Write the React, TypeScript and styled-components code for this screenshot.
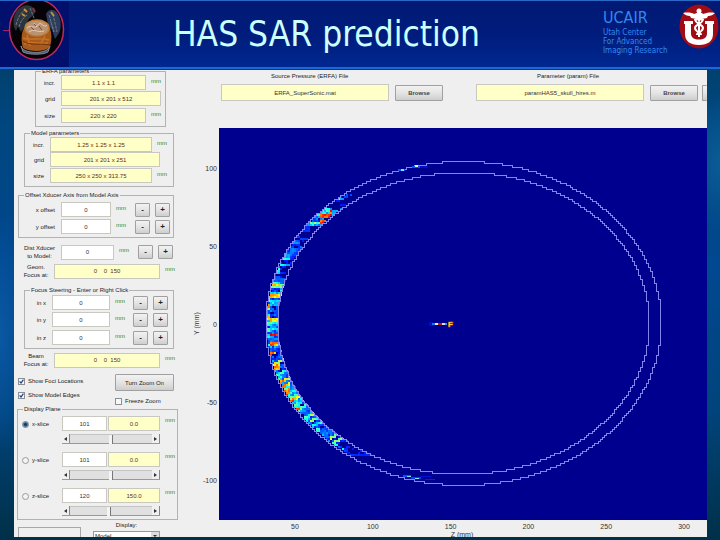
import React from "react";
import styled, { createGlobalStyle } from "styled-components";

const GlobalStyle = createGlobalStyle`
  *, *::before, *::after { box-sizing: border-box; }
  body { margin: 0; background: #003a6c; font-family: "Liberation Sans", Arial, sans-serif; }
  button, input, select { font: inherit; color: inherit; margin: 0; }
`;

const Slide = styled.div`
  display: flex;
  flex-direction: column;
  height: 100vh;
  overflow: hidden;
  background:
    radial-gradient(ellipse 40px 70px at 100% 30%, #0a5c96 0, transparent 100%),
    radial-gradient(ellipse 30px 120px at 0 62%, #0a58a4 0, transparent 100%),
    linear-gradient(#003a58 0, #00467e 22%, #004890 50%, #00447c 76%, #003048 100%);
`;

const Header = styled.header`
  display: flex;
  flex: none;
  height: 69px;
  border-top: 1px solid #2a68c8;
  border-bottom: 2px solid #1c68d8;
  background: linear-gradient(#001a74 0, #001c7c 50%, #002890 100%);
`;

const BasketCell = styled.div`
  width: 69px;
  background: #00106c;
  svg { display: block; }
`;

const Title = styled.h1`
  flex: 1;
  margin: 0;
  padding: 0 19px 0 0;
  font: 400 35px/66px "DejaVu Sans Condensed", "Noto Sans", sans-serif;
  text-align: center;
  white-space: nowrap;
  color: #ccffff;
`;

const Org = styled.div`
  width: 76px;
  padding-top: 8px;
  font: 400 8px/9px "DejaVu Sans Condensed", "Noto Sans", sans-serif;
  white-space: nowrap;
  color: #3388f0;
  strong { display: block; margin-bottom: 1px; font-size: 16px; font-weight: 400; line-height: 18px; }
`;

const SealCell = styled.div`
  width: 41px;
  padding-top: 3px;
  svg { display: block; }
`;

const AppWindow = styled.main`
  display: flex;
  flex: 1;
  min-height: 0;
  margin: 1px 13px 3px 14px;
  overflow: hidden;
  background: #efefef;
  color: #222;
  font-size: 6px;
  line-height: 8px;
`;

const Sidebar = styled.aside`
  flex: none;
  width: 177px;
  margin-top: -3px;
`;

const Group = styled.fieldset<{ $inset: number; $right: number; $pad?: number; $top?: number }>`
  min-width: 0;
  border: 1px solid #b2b2b2;
  margin: ${(p) => p.$top ?? 0}px ${(p) => p.$right}px 0 ${(p) => p.$inset}px;
  padding: ${(p) => p.$pad ?? 0}px 0 3px;
  legend { margin-left: 5px; padding: 0 1px; line-height: 8px; white-space: nowrap; }
`;

const Row = styled.div<{ $label: number; $field: number; $top?: number }>`
  display: grid;
  grid-template-columns: ${(p) => p.$label}px ${(p) => p.$field}px auto 1fr;
  align-items: center;
  height: 15px;
  margin-top: ${(p) => p.$top ?? 0}px;
`;

const Label = styled.label`
  padding-right: 6px;
  text-align: right;
  line-height: 8px;
  white-space: pre-line;
`;

const TwoLine = styled(Label)`
  text-align: center;
  padding: 0 0 0 4px;
`;

const Field = styled.input<{ $computed?: boolean }>`
  width: 100%;
  min-width: 0;
  height: 15px;
  padding: 0;
  border: 1px solid #c8c8c0;
  border-radius: 0;
  background: ${(p) => (p.$computed ? "#ffffc8" : "#fff")};
  color: ${(p) => (p.$computed ? "#5a3020" : "#333")};
  text-align: center;
  outline: 0;
`;

const Unit = styled.span`
  padding: 0 0 4px 5px;
  color: #1c8a2c;
  line-height: 8px;
`;

const Steps = styled.div<{ $left: number }>`
  display: flex;
  gap: 5px;
  padding-left: ${(p) => p.$left}px;
`;

const PushButton = styled.button`
  display: flex;
  align-items: center;
  justify-content: center;
  min-width: 15px;
  height: 14px;
  padding: 0;
  border: 1px solid #a0a0a0;
  border-radius: 1px;
  background: linear-gradient(#f2f2f2, #e4e4e4 50%, #cecece);
`;

const StepButton = styled(PushButton)`
  font-size: 8px;
  font-weight: 700;
`;

const WideButton = styled(PushButton)`
  width: 59px;
  height: 17px;
`;

const BrowseButton = styled(PushButton)`
  width: 48px;
  height: 16px;
  font-weight: 700;
  color: #444;
`;

const Options = styled.div`
  display: flex;
  justify-content: space-between;
  margin: 7px 17px 0 4px;
`;

const OptionColumn = styled.div`
  display: flex;
  flex-direction: column;
  gap: 6px;
`;

const Choice = styled.label`
  display: flex;
  align-items: center;
  gap: 3px;
  height: 8px;
  white-space: nowrap;
`;

const FociColumn = styled(OptionColumn)`
  padding-top: 3px;
`;

const Tick = styled.input`
  appearance: none;
  width: 7px;
  height: 7px;
  border: 1px solid #8a8f98;
  background: #f8f8f8;
  &:checked {
    background: #f4f6fc url("data:image/svg+xml,%3Csvg xmlns='http://www.w3.org/2000/svg' viewBox='0 0 5 5'%3E%3Cpath d='M.6 2.4 2 4 4.4.6' fill='none' stroke='%23204080' stroke-width='1.2'/%3E%3C/svg%3E");
  }
`;

const Radio = styled.input`
  appearance: none;
  width: 7px;
  height: 7px;
  border: 1px solid #999;
  border-radius: 50%;
  background: #f4f4f4;
  &:checked { background: radial-gradient(circle, #123c66 0 1px, #8ac0e0 3px); border-color: #708090; }
`;

const Slice = styled.div`
  display: grid;
  grid-template-columns: 40px 98px 1fr;
  height: 28px;
  margin-bottom: 8px;
  padding-left: 4px;
  &:last-child { margin-bottom: 0; }
`;

const SliceChoice = styled(Choice)`
  margin-top: 4px;
`;

const Pair = styled.div`
  display: grid;
  grid-template-columns: 45px 1fr;
  column-gap: 1px;
`;

const ScrollBar = styled.div`
  display: flex;
  height: 10px;
  margin-top: 3px;
  border-bottom: 1px solid #999;
`;

const Arrow = styled.button`
  display: flex;
  align-items: center;
  justify-content: center;
  width: 8px;
  padding: 0;
  border: 0;
  border-right: 1px solid #888;
  background: #f0f0f0;
`;

const Range = styled.input`
  appearance: none;
  flex: 1;
  min-width: 0;
  height: 9px;
  background: #e0e0e0;
  border-top: 1px solid #c4c4c4;
  &::-webkit-slider-thumb {
    appearance: none;
    width: 4px;
    height: 9px;
    background: #f4f4f4;
    border-right: 1px solid #777;
  }
`;

const Footer = styled.div`
  display: grid;
  grid-template-columns: 63px 67px;
  column-gap: 12px;
  margin: 1px 0 0 4px;
`;

const Notes = styled.div`
  height: 24px;
  margin-top: 6px;
  border: 1px solid #a8a8a8;
`;

const DisplayLabel = styled.label`
  display: flex;
  flex-direction: column;
  align-items: center;
  gap: 2px;
`;

const Select = styled.select`
  appearance: none;
  width: 100%;
  height: 10px;
  padding: 0 0 0 1px;
  border: 1px solid #999;
  border-radius: 0;
  line-height: 8px;
  background:
    url("data:image/svg+xml,%3Csvg xmlns='http://www.w3.org/2000/svg' viewBox='0 0 8 8'%3E%3Cpath d='M2 3h4L4 5z' fill='%23333'/%3E%3C/svg%3E") right / 8px 8px no-repeat,
    #fff linear-gradient(#dcdcdc, #dcdcdc) right / 8px 100% no-repeat;
`;

const Viewer = styled.section`
  display: flex;
  flex: 1;
  flex-direction: column;
  min-width: 0;
`;

const Files = styled.div`
  display: flex;
  gap: 4px;
  height: 58px;
  padding: 2px 0 0 30px;
`;

const FileGroup = styled.div`
  flex: 1;
  display: grid;
  grid-template-columns: 1fr auto;
  grid-template-rows: 8px 17px;
  gap: 4px 6px;
  align-items: center;
  &:first-child { margin-right: 29px; }
  label { grid-column: 1 / 3; }
`;

const FileLabel = styled.label<{ $shift: number }>`
  padding-left: ${(p) => p.$shift}px;
`;

const FileField = styled(Field)`
  height: 17px;
  color: #333;
`;

const CutButton = styled(PushButton)`
  width: 5px;
  min-width: 0;
  height: 16px;
  margin-top: 13px;
  border-right: 0;
`;

const Plot = styled.figure`
  flex: 1;
  display: grid;
  grid-template-columns: 12px 16px minmax(0, 1fr);
  grid-template-rows: minmax(0, 1fr) 17px;
  min-height: 0;
  margin: 0;
  font-size: 7px;
  color: #333;
`;

const YTitle = styled.div`
  writing-mode: vertical-rl;
  transform: rotate(180deg);
  text-align: center;
  line-height: 12px;
`;

const YTicks = styled.div`
  display: flex;
  flex-direction: column;
  align-items: flex-end;
  justify-content: space-between;
  padding: 37px 2px 35px;
  white-space: nowrap;
`;

const Chart = styled.svg`
  display: block;
  width: 100%;
  height: 100%;
  background: #00008f;
`;

const XAxis = styled.figcaption`
  grid-column: 3;
  text-align: center;
`;

const XTicks = styled.div`
  display: flex;
  justify-content: space-between;
  padding: 3px 13px 0 66px;
  line-height: 8px;
  span { width: 20px; }
`;

const XTitle = styled.div`
  padding-right: 2px;
  line-height: 8px;
`;

/* ---- field map ---- */

const CX = 244;
const CY = 195;

function contour(rx: number, ry: number) {
  const snap = (v: number) => Math.floor(v / 2) * 2 + 1;
  let d = "";
  let lastX = NaN;
  let lastY = NaN;
  for (let i = 0; i <= 1440; i++) {
    const a = ((i + 0.5) / 1440) * Math.PI * 2;
    const x = snap(CX + rx * Math.cos(a));
    const y = snap(CY + ry * Math.sin(a));
    if (!d) d = `M${x} ${y}`;
    else {
      if (x !== lastX) d += `H${x}`;
      if (y !== lastY) d += `V${y}`;
    }
    lastX = x;
    lastY = y;
  }
  return d;
}

function hash(a: number, b: number) {
  const s = Math.sin(a * 127.1 + b * 311.7) * 43758.5453;
  return s - Math.floor(s);
}

function jet(t: number) {
  const c = (k: number) => Math.round(255 * Math.max(0, Math.min(1, 1.5 - Math.abs(4 * t - k))));
  return `rgb(${c(3)},${c(2)},${c(1)})`;
}

function strength(x: number, y: number, depth: number) {
  if (y < 66) return 0;
  if (y < 72) return depth < 0.4 ? 0.45 : 0;
  if (y < 80) return 0.06;
  if (y < 97) return x < 112 ? 1.15 : 0.3;
  if (y < 112) return 0.12;
  if (y < 156) return 0.55 * (1 - depth * 0.7);
  if (y < 176) return 0.85 * (1 - depth * 0.2);
  if (y < 222) return 1 - depth * 0.15;
  if (y < 300) return 0.95 - depth * 0.4;
  if (y < 314) return 0.7 - depth * 0.2;
  if (y < 328) return depth < 0.2 ? 0.5 : 0.1;
  return 0.04;
}

type Cell = { x: number; y: number; fill: string };

function heatCells(): Cell[] {
  const out: Cell[] = [];
  for (let y = 36; y < 350; y += 2) {
    for (let x = 47; x < 180; x += 2) {
      const ox = (x + 1 - CX) / 197;
      const oy = (y + 1 - CY) / 161;
      const r = Math.sqrt(ox * ox + oy * oy);
      const depth = (1 - r) / 0.06;
      if (depth < 0 || depth > 1) continue;
      const v = y > 222 ? y + x * 0.5 : y + x * 0.1;
      const streak = hash(Math.floor(x / 10), Math.floor(v / 3));
      const grain = hash(x, y);
      const t = strength(x, y, depth) * (0.85 * streak * streak + 0.2 * grain);
      if (t > 0.05) out.push({ x, y, fill: jet(0.1 + t * 0.85) });
    }
  }
  return out;
}

const CELLS = heatCells();
const OUTER = contour(198, 162);
const INNER = contour(186, 151);

const FieldMap = () => (
  <Chart viewBox="0 0 488 392" preserveAspectRatio="none" role="img" aria-label="Predicted SAR, x-slice">
    <g shapeRendering="crispEdges">
      {CELLS.map((c) => (
        <rect key={`${c.x}-${c.y}`} x={c.x} y={c.y} width="2" height="2" fill={c.fill} />
      ))}
      <g transform="translate(.5 .5)" fill="none" stroke="#8484ee">
        <path d={OUTER} />
        <path d={INNER} />
      </g>
      <g fill="#0a50ff">
        <rect x="179" y="41" width="7" height="2" />
        <rect x="193" y="38" width="8" height="2" />
        <rect x="201" y="38" width="8" height="2" fill="#0010c8" />
        <rect x="184" y="347" width="8" height="2" />
        <rect x="192" y="349" width="10" height="2" fill="#0040ff" />
        <rect x="202" y="348" width="10" height="1" fill="#0010d0" />
        <rect x="206" y="351" width="10" height="1" fill="#0020e0" />
      </g>
      <g fill="#70e8ff">
        <rect x="182" y="41" width="3" height="2" />
        <rect x="196" y="37" width="3" height="2" fill="#d8ffb0" />
        <rect x="188" y="348" width="4" height="1" />
        <rect x="196" y="350" width="4" height="1" />
      </g>
      <rect x="206" y="195" width="4" height="2" fill="#0000a4" />
      <rect x="210" y="194" width="4" height="4" fill="#0010c0" />
      <rect x="213" y="195" width="3" height="2" fill="#1870ff" />
      <rect x="216" y="195" width="3" height="2" fill="#c8ffd0" />
      <rect x="219" y="195" width="4" height="2" fill="#c01820" />
      <rect x="223" y="195" width="3" height="2" fill="#e0d8e0" />
      <rect x="226" y="195" width="2" height="2" fill="#3090ff" />
    </g>
    <text x="229" y="199" fontSize="8" fontWeight="700" fill="#ffd040" stroke="#b02010" strokeWidth="1" paintOrder="stroke">
      F
    </text>
  </Chart>
);

/* ---- logos ---- */

const BasketLogo = () => (
  <svg width="69" height="64" viewBox="0 1 69 64" aria-label="Angel vessel emblem" role="img">
    <path d="M3 30.500h6" stroke="#a81c70" />
    <ellipse cx="36.500" cy="29.500" rx="27" ry="30" fill="#050208" stroke="#c02860" strokeWidth="1.500" />
    <path d="M14 27c-2-9 1-18 9-21 6-2 11 1 12 6-1 4-7 6-8 11l-6 9-3-6-2 5z" fill="#2c343e" />
    <path d="M46 14c3-6 9-5 12 0 3 5 4 13 1 19l-4 6-3-9-4-5z" fill="#2c3c5c" />
    <path d="M16 25c2-7 4-12 9-15M19 27c1-5 4-9 8-12M30 8l4 10M49 15l5 17M53 14l4 18M51 22l3 10" stroke="#6c7886" fill="none" strokeDasharray="3 1" />
    <path d="m24 9 3 3m-5 2 3 2m26-4 3 4" stroke="#c8903c" strokeWidth="2" />
    <path d="M33 8l2 4" stroke="#883038" strokeWidth="2" />
    <path d="M21 46c1 8 27 9 29 0l-2 6c-5 3-19 3-25 0z" fill="#4c5870" stroke="#94a0ac" strokeWidth=".8" />
    <path d="M24 28c6-4 19-4 26 0 2 7 2 15-1 20-6 4-19 4-26 0-2-7-2-14 1-20z" fill="#a85a1c" />
    <path d="M23 38c7 3 18-1 26 2M24 44c8-4 16 1 24-1M27 35l3 11M45 36l-5 9" stroke="#c87428" strokeWidth="1.500" fill="none" />
    <path d="M23 41c6 5 18 2 27 4" stroke="#6a300c" fill="none" />
    <ellipse cx="37" cy="28" rx="12" ry="8" fill="#b89470" stroke="#c07c3c" strokeWidth="1.500" />
    <path d="M27 28c4-4 8 2 11-3s5 4 9 0M29 32c5-4 8 1 15-1M34 23l3 4" stroke="#e8c8b4" fill="none" />
    <path d="m31 27 3 3m5-4 3 4m-8-6 2 2" stroke="#784844" />
  </svg>
);

const Seal = () => (
  <svg width="40" height="46" viewBox="679 4 40 46" role="img" aria-label="University seal">
    <ellipse cx="699" cy="26.500" rx="19.500" ry="22" fill="#a00c14" />
    <path d="M684 21h9v3h-2v9c0 4 2 6.500 8 6.500s8-2.500 8-6.500v-9h-2v-3h9v3h-1v10c0 7-5 11-14 11s-14-4-14-11V24h-1z" fill="#fff" />
    <path d="M683 13c5-1 9 0 12 1l1-1h6l1 1c3-1 7-2 12-1-2 2-4 3-7 3l-1 2-5 1v2h-6v-2l-5-1-1-2c-3 0-5-1-7-3z" fill="#fff" />
    <circle cx="699" cy="11" r="2.500" fill="#fff" />
    <path d="M699 12v25" stroke="#fff" strokeWidth="2" />
    <path d="M695 19c0 5 8 5 8 9 0 4-6 3-6 7M703 19c0 5-8 5-8 9 0 4 6 3 6 7" fill="none" stroke="#fff" strokeWidth="2" />
    <path d="m697 20 1 2m-1 8h1m3-10-1 2m0 8h1" stroke="#a00c14" strokeWidth=".8" />
  </svg>
);

/* ---- panel pieces ---- */

type LineProps = {
  id: string;
  label: string;
  value: string;
  labelWidth: number;
  width: number;
  top?: number;
  computed?: boolean;
  unit?: boolean;
  stepLeft?: number;
  stacked?: boolean;
};

const Line = ({ id, label, value, labelWidth, width, top, computed, unit = true, stepLeft, stacked }: LineProps) => {
  const Caption = stacked ? TwoLine : Label;
  return (
    <Row $label={labelWidth} $field={width} $top={top}>
      <Caption htmlFor={id}>{label}</Caption>
      <Field id={id} defaultValue={value} readOnly={computed} $computed={computed} />
      {unit ? <Unit>mm</Unit> : <span />}
      {stepLeft !== undefined && (
        <Steps $left={stepLeft}>
          <StepButton aria-label={`Decrease ${label}`}>-</StepButton>
          <StepButton aria-label={`Increase ${label}`}>+</StepButton>
        </Steps>
      )}
    </Row>
  );
};

const SLICES = [
  { axis: "x", index: "101", mm: "0.0", pos: 50 },
  { axis: "y", index: "101", mm: "0.0", pos: 50 },
  { axis: "z", index: "120", mm: "150.0", pos: 47 },
];

export default function App() {
  return (
    <>
      <GlobalStyle />
      <Slide>
        <Header>
          <BasketCell><BasketLogo /></BasketCell>
          <Title>HAS SAR prediction</Title>
          <Org>
            <strong>UCAIR</strong>
            Utah Center<br />For Advanced<br />Imaging Research
          </Org>
          <SealCell><Seal /></SealCell>
        </Header>
        <AppWindow>
          <Sidebar>
            <Group $inset={21} $right={25}>
              <legend>ERFA parameters</legend>
              <Line id="e-incr" label="incr." value="1.1 x 1.1" labelWidth={25} width={85} computed />
              <Line id="e-grid" label="grid" value="201 x 201 x 512" labelWidth={25} width={100} top={1} computed unit={false} />
              <Line id="e-size" label="size" value="220 x 220" labelWidth={25} width={85} top={2} computed />
            </Group>
            <Group $inset={10} $right={17} $top={2}>
              <legend>Model parameters</legend>
              <Line id="m-incr" label="incr." value="1.25 x 1.25 x 1.25" labelWidth={25} width={102} computed />
              <Line id="m-grid" label="grid" value="201 x 201 x 251" labelWidth={25} width={110} computed unit={false} />
              <Line id="m-size" label="size" value="250 x 250 x 313.75" labelWidth={25} width={102} top={1} computed />
            </Group>
            <Group $inset={4} $right={17} $top={4} $pad={3}>
              <legend>Offset  Xducer Axis from Model Axis</legend>
              <Line id="o-x" label="x offset" value="0" labelWidth={42} width={50} stepLeft={9} />
              <Line id="o-y" label="y offset" value="0" labelWidth={42} width={50} top={2} stepLeft={9} />
            </Group>
            <Line id="dist" label={"Dist Xducer\nto Model:"} value="0" labelWidth={47} width={53} top={6} stepLeft={9} stacked />
            <Line id="geom" label={"Geom.\nFocus at:"} value="0    0  150" labelWidth={40} width={106} top={4} computed stacked />
            <Group $inset={10} $right={17} $top={8} $pad={1}>
              <legend>Focus Steering - Enter or Right Click</legend>
              <Line id="f-x" label="in x" value="0" labelWidth={27} width={58} stepLeft={8} />
              <Line id="f-y" label="in y" value="0" labelWidth={27} width={58} top={2} stepLeft={8} />
              <Line id="f-z" label="in z" value="0" labelWidth={27} width={58} top={3} stepLeft={8} />
            </Group>
            <Line id="beam" label={"Beam\nFocus at:"} value="0    0  150" labelWidth={40} width={106} top={3} computed stacked />
            <Options>
              <FociColumn>
                <Choice><Tick type="checkbox" defaultChecked />Show Foci Locations</Choice>
                <Choice><Tick type="checkbox" defaultChecked />Show Model Edges</Choice>
              </FociColumn>
              <OptionColumn>
                <WideButton>Turn Zoom On</WideButton>
                <Choice><Tick type="checkbox" />Freeze Zoom</Choice>
              </OptionColumn>
            </Options>
            <Group $inset={3} $right={13} $pad={3}>
              <legend>Display Plane</legend>
              {SLICES.map((s) => (
                <Slice key={s.axis}>
                  <SliceChoice>
                    <Radio type="radio" name="plane" defaultChecked={s.axis === "x"} />
                    {s.axis}-slice
                  </SliceChoice>
                  <div>
                    <Pair>
                      <Field aria-label={`${s.axis} slice index`} defaultValue={s.index} />
                      <Field aria-label={`${s.axis} slice position`} defaultValue={s.mm} readOnly $computed />
                    </Pair>
                    <ScrollBar>
                      <Arrow aria-label="Previous slice">
                        <svg width="3" height="4"><path d="M3 0v4L0 2z" fill="#333" /></svg>
                      </Arrow>
                      <Range type="range" aria-label={`${s.axis} slice`} defaultValue={s.pos} />
                      <Arrow aria-label="Next slice">
                        <svg width="3" height="4"><path d="M0 0v4l3-2z" fill="#333" /></svg>
                      </Arrow>
                    </ScrollBar>
                  </div>
                  <Unit>mm</Unit>
                </Slice>
              ))}
            </Group>
            <Footer>
              <Notes />
              <DisplayLabel>
                Display:
                <Select defaultValue="Model"><option>Model</option></Select>
              </DisplayLabel>
            </Footer>
          </Sidebar>
          <Viewer>
            <Files>
              <FileGroup>
                <FileLabel htmlFor="erfa" $shift={50}>Source Pressure (ERFA) File</FileLabel>
                <FileField id="erfa" defaultValue="ERFA_SuperSonic.mat" $computed />
                <BrowseButton>Browse</BrowseButton>
              </FileGroup>
              <FileGroup>
                <FileLabel htmlFor="param" $shift={61}>Parameter (param) File</FileLabel>
                <FileField id="param" defaultValue="paramHAS5_skull_hires.m" $computed />
                <BrowseButton>Browse</BrowseButton>
              </FileGroup>
              <CutButton aria-label="More" />
            </Files>
            <Plot>
              <YTitle>Y (mm)</YTitle>
              <YTicks>
                {["100", "50", "0", "-50", "-100"].map((t) => <span key={t}>{t}</span>)}
              </YTicks>
              <FieldMap />
              <XAxis>
                <XTicks>
                  {["50", "100", "150", "200", "250", "300"].map((t) => <span key={t}>{t}</span>)}
                </XTicks>
                <XTitle>Z (mm)</XTitle>
              </XAxis>
            </Plot>
          </Viewer>
        </AppWindow>
      </Slide>
    </>
  );
}
